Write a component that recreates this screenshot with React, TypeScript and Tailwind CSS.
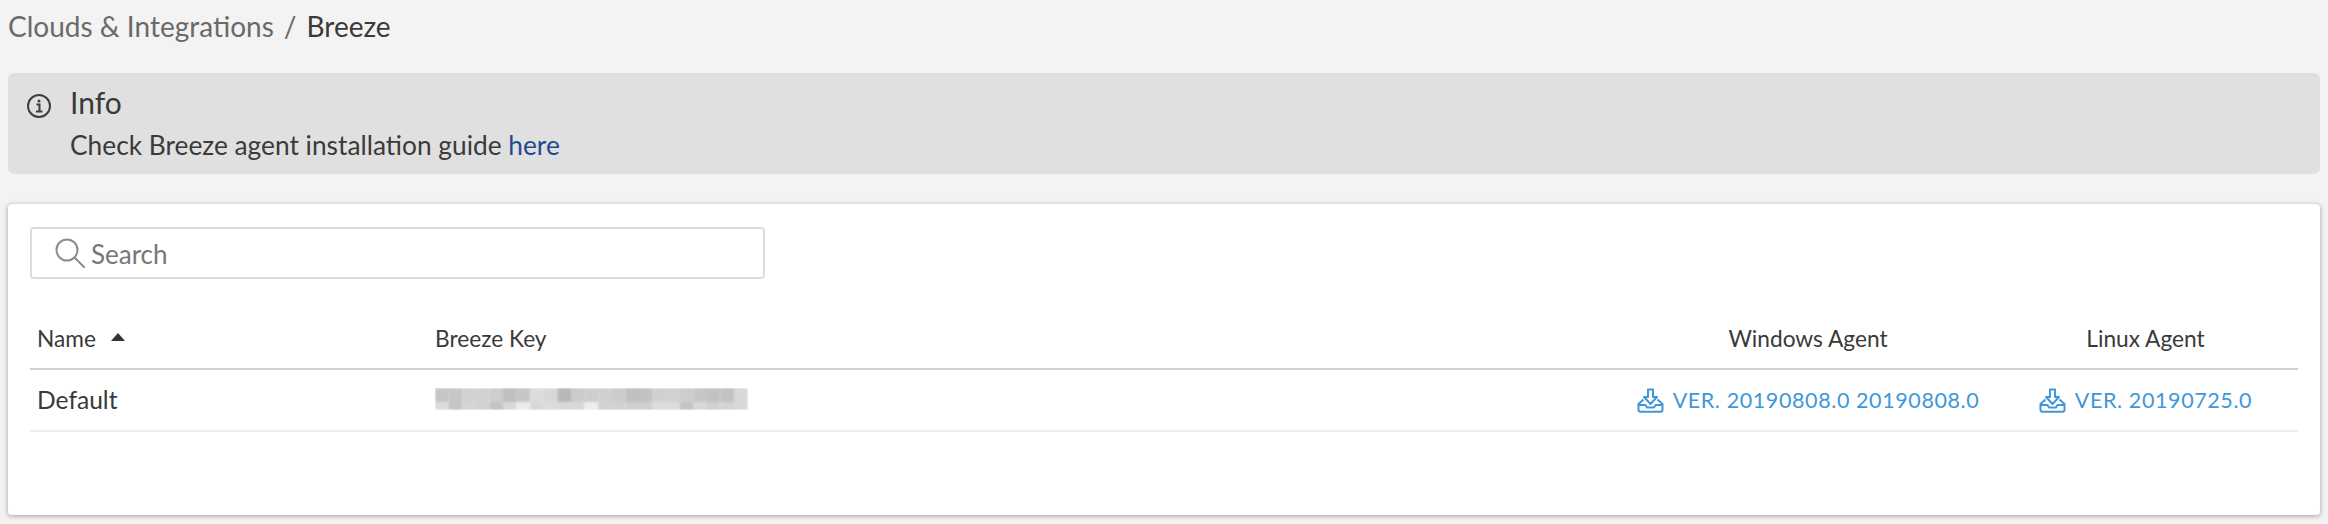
import { ReactNode } from 'react'

const KEY_TOP = ['#c6c6c6', '#c6c6c6', '#d2d2d2', '#d2d2d2', '#cecece', '#c0c0c0', '#c6c6c6', '#dcdcdc', '#d8d8d8', '#b8b8b8', '#cccccc', '#cecece', '#d0d0d0', '#cccccc', '#c0c0c0', '#c2c2c2', '#d0d0d0', '#d2d2d2', '#cdcdcd', '#c6c6c6', '#c2c2c2', '#c2c2c2', '#d8d8d8']
const KEY_BOTTOM = ['#dcdcdc', '#c6c6c6', '#d6d6d6', '#d2d2d2', '#c4c4c4', '#d8d8d8', '#ececec', '#d8d8d8', '#dcdcdc', '#d8d8d8', '#d8d8d8', '#ededed', '#d2d2d2', '#d2d2d2', '#d0d0d0', '#d0d0d0', '#dcdcdc', '#dcdcdc', '#c4c4c4', '#d8d8d8', '#d0d0d0', '#d4d4d4', '#d8d8d8']

function InfoIcon() {
  return (
    <svg width="26" height="26" viewBox="0 0 26 26" fill="none" stroke="#3d3d3d">
      <circle cx="13" cy="13" r="11" strokeWidth="2" />
      <circle cx="13" cy="8" r="1.5" fill="#3d3d3d" stroke="none" />
      <path d="M10.5 11.5H13.5V18M10 18.5H16.5" strokeWidth="2" />
    </svg>
  )
}

function SearchIcon() {
  return (
    <svg width="30" height="30" viewBox="0 0 30 30" fill="none" stroke="#8c8c8c" strokeWidth="2">
      <circle cx="12" cy="12" r="10.5" />
      <path d="M19.5 19.5L29 29" strokeLinecap="round" />
    </svg>
  )
}

function DownloadIcon() {
  return (
    <svg width="27" height="25" viewBox="0 0 27 25" fill="none" stroke="#3f97d9" strokeWidth="2" strokeLinejoin="round" className="shrink-0">
      <path d="M11 1.5H16V9H20L13.5 16L7 9H11Z" />
      <path d="M6.5 11.5L1.5 16V21.5C1.5 22.8 2.4 23.8 3.5 23.8H23.5C24.6 23.8 25.5 22.8 25.5 21.5V16L20.5 11.5" />
      <path d="M1.5 17H8.5L10 19.5H17L18.5 17H25.5" />
    </svg>
  )
}

function BlurredKey() {
  return (
    <svg width="313" height="22" viewBox="0 0 313 22" className="block">
      <defs>
        <filter id="soft">
          <feGaussianBlur stdDeviation="0.8" />
        </filter>
      </defs>
      <g filter="url(#soft)">
        {KEY_TOP.map((c, i) => (
          <rect key={i} x={i * 13.6} y="0" width="13.6" height="14" fill={c} />
        ))}
        {KEY_BOTTOM.map((c, i) => (
          <rect key={i} x={i * 13.6} y="14" width="13.6" height="8" fill={c} />
        ))}
      </g>
    </svg>
  )
}

function AgentLink({ children }: { children: ReactNode }) {
  return (
    <a className="flex items-center gap-[9px] text-[21.5px] tracking-[0.6px] text-[#3f97d9] whitespace-nowrap">
      <DownloadIcon />
      {children}
    </a>
  )
}

export default function App() {
  return (
    <div className="h-[524px] w-[2328px] overflow-hidden bg-[#f3f3f3] px-[8px] font-['Lato','Liberation_Sans',sans-serif] text-[#3a3a3a]">
      <div className="flex h-[73px] items-start gap-[10px] pt-[9px] text-[28px] leading-[34px]">
        <span className="text-[#6a6a6a]">Clouds &amp; Integrations</span>
        <span className="text-[#6a6a6a]">/</span>
        <span>Breeze</span>
      </div>

      {/* Info banner */}
      <div className="flex h-[101px] gap-[18px] rounded-[6px] bg-[#e0e0e0] px-[18px] pt-[10px]">
        <div className="pt-[10px]">
          <InfoIcon />
        </div>
        <div>
          <div className="text-[30px] leading-[38px]">Info</div>
          <div className="mt-[8px] text-[26.3px] leading-[32px]">
            Check Breeze agent installation guide <a className="text-[#1f4a8f]">here</a>
          </div>
        </div>
      </div>

      {/* Table card */}
      <div className="mt-[30px] h-[311px] rounded-[4px] bg-white px-[22px] pt-[23px] shadow-[0_1px_5px_rgba(0,0,0,0.35)]">
        <div className="flex h-[52px] w-[735px] items-center gap-[6px] rounded-[4px] border-2 border-[#dcdcdc] pl-[23px]">
          <SearchIcon />
          <span className="pt-[2px] text-[26px] leading-[34px] text-[#777]">Search</span>
        </div>

        <div className="mt-[40px] grid h-[51px] grid-cols-[405px_1fr_370px_305px] items-center border-b-2 border-[#d0d0d0] pb-[9px] text-[22.7px]">
          <div className="flex items-center gap-[15px] pl-[7px]">
            Name
            <span className="mb-[3px] h-0 w-0 border-x-[7px] border-b-[8px] border-x-transparent border-b-[#333]" />
          </div>
          <div>Breeze Key</div>
          <div className="text-center">Windows Agent</div>
          <div className="text-center">Linux Agent</div>
        </div>

        <div className="grid h-[62px] grid-cols-[405px_1fr_370px_305px] items-center border-b-2 border-[#eeeeee] text-[24.6px]">
          <div className="pl-[7px] pt-[1px]">Default</div>
          <div className="pb-[2px]">
            <BlurredKey />
          </div>
          <div className="flex justify-center">
            <AgentLink>VER. 20190808.0 20190808.0</AgentLink>
          </div>
          <div className="flex justify-center">
            <AgentLink>VER. 20190725.0</AgentLink>
          </div>
        </div>
      </div>
    </div>
  )
}
